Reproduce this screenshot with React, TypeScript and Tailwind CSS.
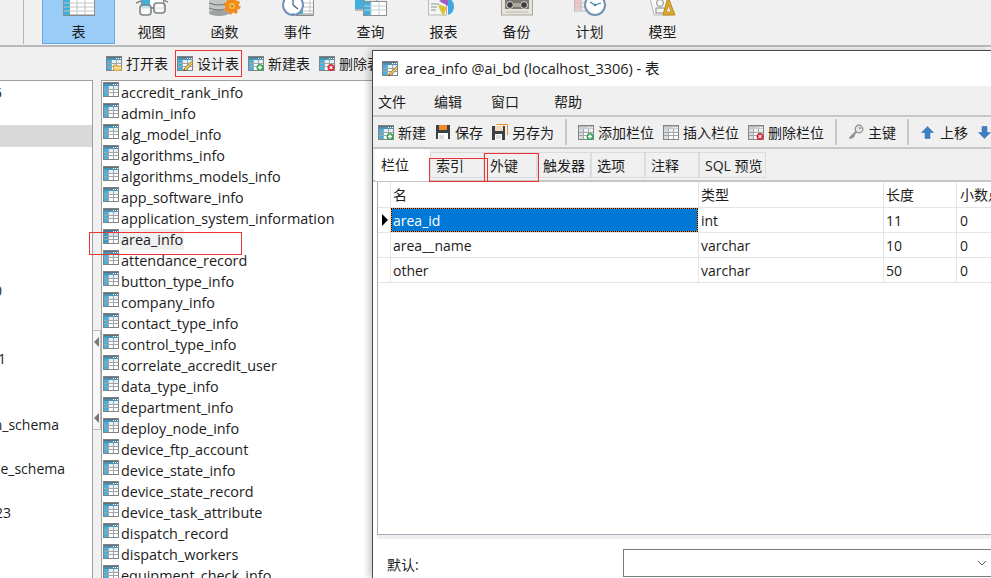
import React from "react";

const FONT = "font-['Open_Sans','Noto_Sans_CJK_SC',sans-serif]";

function SmallTable({ overlay, dim, hl }: { overlay?: React.ReactNode; dim?: boolean; hl?: boolean }) {
  return (
    <svg width="16" height="15" viewBox="0 0 16 15" className="shrink-0">
      <rect x="0.5" y="0.5" width="15" height="14" fill="#fff" stroke="#7f8487" />
      <rect x="1" y="1" width="14" height="3" fill={dim ? "#c9cdd0" : hl ? "#2f7fb5" : "#4b93b5"} />
      <rect x="1" y="1" width="14" height="1" fill={dim ? "#b5b9bc" : "#5d6f7a"} />
      <rect x="1" y="4" width="4" height="10" fill={dim ? "#d7dbde" : hl ? "#3a9ad2" : "#45b1dc"} />
      <rect x="5" y="4" width="10" height="3" fill={dim ? "#eef0f1" : hl ? "#cfe3ef" : "#e6f1f6"} />
      <path d="M1 7.5H15M1 10.5H15M5.5 4V14M10.5 4V14" stroke="#9fa5a9" strokeWidth="1" />
      <path d="M10 2.5H15" stroke="#fff" strokeWidth="1" strokeDasharray="1 1" />
      {overlay}
    </svg>
  );
}

const Plus = (
  <g>
    <circle cx="12" cy="11.5" r="3.5" fill="#3aa655" />
    <path d="M10 11.5H14M12 9.5V13.5" stroke="#fff" strokeWidth="1.4" />
  </g>
);
const Del = (
  <g>
    <circle cx="12" cy="11.5" r="3.5" fill="#d92b3a" />
    <path d="M10.6 10.1L13.4 12.9M13.4 10.1L10.6 12.9" stroke="#fff" strokeWidth="1.1" />
  </g>
);
const Pencil = (
  <g>
    <path d="M14.5 5.5L16 7L9 14.5L6.5 15L7 12.5Z" fill="#e7c35c" stroke="#8d6f2a" strokeWidth="0.7" />
    <path d="M6.5 15L7 13L8.5 14.5Z" fill="#444" />
  </g>
);
const Folder = (
  <g>
    <path d="M7.5 9H11L12 10H15.5V15H7.5Z" fill="#f0c766" stroke="#b48a32" strokeWidth="0.7" />
    <path d="M8 12H15" stroke="#fff2c4" />
  </g>
);

function Floppy({ orange }: { orange?: boolean }) {
  return (
    <svg width="16" height="16" viewBox="0 0 16 16" className="shrink-0">
      {orange && <path d="M4.5 0.5H15.5V11" fill="none" stroke="#e88a2e" strokeWidth="1" />}
      <rect x={orange ? 0 : 1} y={orange ? 2 : 1} width={orange ? 13 : 14} height={14} fill="#3b4045" />
      <rect x={orange ? 3 : 4} y={orange ? 2 : 1} width="8" height="5" fill={orange ? "#f3d9b8" : "#f08a2a"} />
      <rect x={3} y={orange ? 10 : 9} width={orange ? 7 : 10} height={6} fill="#fff" />
      <path d="M4 12H9M4 14H9" stroke="#b9bcbe" />
    </svg>
  );
}

function Key() {
  return (
    <svg width="16" height="16" viewBox="0 0 16 16" className="shrink-0">
      <circle cx="11" cy="5" r="3.8" fill="#e4e4e4" stroke="#8b8b8b" strokeWidth="1.2" />
      <circle cx="12" cy="4" r="1" fill="#8b8b8b" />
      <path d="M8.5 7.5L1.5 14.5M3.5 12.5L5 14M5 11L6.5 12.5" stroke="#8b8b8b" strokeWidth="1.8" />
    </svg>
  );
}

function ArrowV({ down }: { down?: boolean }) {
  return (
    <svg width="13" height="13" viewBox="0 0 13 13" className="shrink-0">
      <path
        d={down ? "M4 0.5H9V6.5H12.5L6.5 12.5L0.5 6.5H4Z" : "M4 12.5H9V6.5H12.5L6.5 0.5L0.5 6.5H4Z"}
        fill="#3f7fc4"
        stroke="#2f6aa8"
        strokeWidth="0.5"
      />
    </svg>
  );
}

function BigIcon({ children }: { children: React.ReactNode }) {
  return (
    <svg width="32" height="16" viewBox="0 0 32 16" className="shrink-0">
      {children}
    </svg>
  );
}

const BigGrid = ({ x = 0, w = 32, y = -6, h = 21 }: { x?: number; w?: number; y?: number; h?: number }) => (
  <g>
    <rect x={x + 0.5} y={y} width={w - 1} height={h} fill="#fff" stroke="#8c9091" />
    <rect x={x + 1} y={y} width={6} height={h} fill="#3fb0d9" />
    {[3, 7, 11].map((d) => (
      <path key={d} d={`M${x + 1} ${d}H${x + w - 1}`} stroke="#bfc4c6" />
    ))}
    <path d={`M${x + 14} ${y}V${y + h}M${x + 22} ${y}V${y + h}`} stroke="#bfc4c6" />
    <path d={`M${x} 15.5H${x + w}`} stroke="#85898a" />
  </g>
);

const bigIcons: Record<string, React.ReactNode> = {
  表: <BigGrid />,
  视图: (
    <g>
      <rect x="5.5" y="-6" width="22" height="14" fill="#fff" stroke="#8c9091" />
      <rect x="6" y="-6" width="8" height="14" fill="#3fb0d9" />
      <path d="M0 3L5 1M32 2L27 0" stroke="#888" strokeWidth="1.4" />
      <rect x="4" y="5" width="11" height="10" rx="3" fill="#ffffffaa" stroke="#7d8487" strokeWidth="1.6" />
      <rect x="18" y="3" width="11" height="10" rx="3" fill="#ffffffaa" stroke="#7d8487" strokeWidth="1.6" />
      <path d="M15 8H18" stroke="#7d8487" strokeWidth="1.6" />
    </g>
  ),
  函数: (
    <g>
      <rect x="0" y="-4" width="20" height="17" fill="#c2c6c7" />
      <ellipse cx="10" cy="13" rx="10" ry="3" fill="#9da2a3" />
      <path d="M0 3Q10 7 20 3M0 8Q10 12 20 8" stroke="#6f7475" fill="none" />
      <circle cx="23" cy="6" r="7" fill="#f08a1d" />
      <circle cx="23" cy="6" r="7.6" fill="none" stroke="#f08a1d" strokeWidth="2" strokeDasharray="3 3" />
      <circle cx="23" cy="6" r="3" fill="#f5c64a" />
      <circle cx="23" cy="6" r="1.5" fill="#d9801e" />
    </g>
  ),
  事件: (
    <g>
      <BigGrid x={14} w={18} y={-6} h={20} />
      <circle cx="11" cy="5" r="10" fill="#fff" stroke="#7391b5" strokeWidth="2" />
      <path d="M11 5V-1M11 5L16 9" stroke="#3f5a7a" strokeWidth="1.2" />
      <circle cx="11" cy="14" r="0.8" fill="#4a6a8a" />
    </g>
  ),
  查询: (
    <g>
      <rect x="0" y="-4" width="22" height="14" fill="#dfe8eb" stroke="#7f8688" />
      <rect x="0" y="-2" width="10" height="11" fill="#3fb0d9" />
      <rect x="8.5" y="1.5" width="23" height="14" fill="#fff" stroke="#8c9091" />
      <rect x="9" y="2" width="7" height="13" fill="#3fb0d9" />
      <path d="M9 6H31M9 10H31M16 2V15M24 2V15" stroke="#bfd0d6" />
    </g>
  ),
  报表: (
    <g>
      <rect x="0.5" y="-2" width="18" height="17" fill="#f4f4f4" stroke="#b7b7b7" />
      <path d="M3 4H11M3 7H9M3 10H8" stroke="#8f9597" />
      <path d="M20 -2A9 9 0 0 1 20 15Z" fill="#3ea8e0" />
      <path d="M20 -4L11 1L20 6Z" fill="#9d5fc2" />
      <path d="M10 4L18 7L16 16Q12 12 10 4Z" fill="#c3d23a" />
      <path d="M13 6L19 8L15 14Z" fill="#f1b72e" />
    </g>
  ),
  备份: (
    <g>
      <rect x="0.5" y="-4" width="31" height="19" fill="#e5e3dc" stroke="#a9a89f" />
      <rect x="4" y="0" width="24" height="9" fill="#7d776c" />
      <circle cx="9" cy="5" r="3.4" fill="#3a3a38" stroke="#dedede" />
      <circle cx="23" cy="5" r="3.4" fill="#3a3a38" stroke="#dedede" />
      <rect x="13" y="3" width="6" height="4" fill="#ada89c" />
      <path d="M5 12H27" stroke="#bdbab0" />
    </g>
  ),
  计划: (
    <g>
      <rect x="0.5" y="-4" width="18" height="15" fill="#f3f0ef" stroke="#bcb8b6" />
      <rect x="1" y="0" width="7" height="10" fill="#efc8c8" />
      <path d="M1 3H18M1 7H18M7 -4V11" stroke="#c9c3c1" />
      <circle cx="21" cy="5" r="10" fill="#fff" stroke="#7391b5" strokeWidth="2" />
      <path d="M21 5L16 2M21 5L27 3" stroke="#3f7f95" strokeWidth="1.2" />
      <circle cx="21" cy="5" r="1.2" fill="#2a89b0" />
    </g>
  ),
  模型: (
    <g>
      <path d="M3 -2H22L23 15H7Z" fill="#f7f7f6" stroke="#b5b5b3" />
      <circle cx="13" cy="3" r="3.5" fill="#f4f4f2" stroke="#8a8a88" />
      <rect x="9" y="8" width="9" height="5" fill="#f4f4f2" stroke="#8a8a88" />
      <path d="M21 -3L16 15H28Z" fill="#ddaa2b" stroke="#b9861c" />
      <path d="M21.5 5L19.5 12H24Z" fill="#f5f2e8" stroke="#a47a1a" strokeWidth="0.6" />
    </g>
  ),
};

const topItems = ["表", "视图", "函数", "事件", "查询", "报表", "备份", "计划", "模型"];

const tables = [
  "accredit_rank_info",
  "admin_info",
  "alg_model_info",
  "algorithms_info",
  "algorithms_models_info",
  "app_software_info",
  "application_system_information",
  "area_info",
  "attendance_record",
  "button_type_info",
  "company_info",
  "contact_type_info",
  "control_type_info",
  "correlate_accredit_user",
  "data_type_info",
  "department_info",
  "deploy_node_info",
  "device_ftp_account",
  "device_state_info",
  "device_state_record",
  "device_task_attribute",
  "dispatch_record",
  "dispatch_workers",
  "equipment_check_info",
];

const leftRows: { t: string; w: number; mt?: number; sel?: boolean }[] = [
  { t: "ai_bd_2015", w: 2 },
  { t: "", w: 0 },
  { t: "", w: 0, sel: true },
  { t: "", w: 0 },
  { t: "", w: 0 },
  { t: "", w: 0 },
  { t: "", w: 0 },
  { t: "", w: 0 },
  { t: "", w: 0 },
  { t: "db_10", w: 2 },
  { t: "", w: 0 },
  { t: "", w: 0 },
  { t: "db_1", w: 6, mt: 2 },
  { t: "", w: 0 },
  { t: "", w: 0 },
  { t: "information_schema", w: 59 },
  { t: "", w: 0 },
  { t: "performance_schema", w: 65 },
  { t: "", w: 0 },
  { t: "test123", w: 11 },
];

function ToolItem({ icon, text, ml }: { icon: React.ReactNode; text: string; ml: string }) {
  return (
    <div className={`flex items-center ${ml}`}>
      {icon}
      <span className="ml-[4px] whitespace-nowrap">{text}</span>
    </div>
  );
}

const Sep = ({ ml }: { ml: string }) => <div className={`w-[2px] h-[26px] bg-[#c8c8c8] ${ml}`} />;

function Tab({ text, w, active }: { text: string; w: string; active?: boolean }) {
  return active ? (
    <div className={`${w} h-[32px] bg-white pl-[6px] pt-[5px]`}>{text}</div>
  ) : (
    <div className={`${w} h-[26px] mt-[3px] bg-[#f0f0f0] border border-[#dcdcdc] flex items-center pl-[5px] whitespace-nowrap`}>
      {text}
    </div>
  );
}

const columns = "grid grid-cols-[13px_308px_185px_73px_1fr]";

function GridRow({ name, type, len, scale, sel }: { name: string; type: string; len: string; scale: string; sel?: boolean }) {
  return (
    <div className={`${columns} h-[25px] border-b border-[#e4e4e4]`}>
      <div className="border-r border-[#e4e4e4] flex items-center pl-[4px]">
        {sel && <div className="w-0 h-0 border-y-[6px] border-y-transparent border-l-[6px] border-l-black" />}
      </div>
      {sel ? (
        <div className="bg-[#f08a1e] border border-dotted border-black mr-[1px]">
          <div className="h-full bg-[#0078d7] text-white pl-[1px] pt-[1px] flex items-center">{name}</div>
        </div>
      ) : (
        <div className="border-r border-[#e4e4e4] pl-[2px] flex items-center">{name}</div>
      )}
      <div className="border-r border-[#e4e4e4] pl-[2px] pt-[1px] flex items-center">{type}</div>
      <div className="border-r border-[#e4e4e4] pl-[2px] pt-[1px] flex items-center">{len}</div>
      <div className="pl-[3px] pt-[1px] flex items-center">{scale}</div>
    </div>
  );
}

export default function App() {
  return (
    <div className={`relative w-[991px] h-[578px] overflow-hidden bg-[#f0f0f0] text-[14px] text-[#1c1c1c] ${FONT}`}>
      {/* main toolbar */}
      <div className="h-[47px] border-b-2 border-[#b9b9b9] flex">
        <div className="w-[24px] h-[44px] border-r border-[#b4b4b4] shrink-0" />
        <div className="flex ml-[18px]">
          {topItems.map((t, i) => (
            <div
              key={t}
              className={`w-[73px] h-[44px] flex flex-col items-center ${i === 0 ? "bg-[#99ccf6] border border-t-0 border-[#62ace9]" : ""}`}
            >
              <BigIcon>{bigIcons[t]}</BigIcon>
              <span className="mt-[6px] leading-[20px]">{t}</span>
            </div>
          ))}
        </div>
      </div>

      {/* object toolbar */}
      <div className="h-[33px] flex items-center pl-[106px]">
        <ToolItem ml="" icon={<SmallTable overlay={Folder} />} text="打开表" />
        <ToolItem ml="ml-[9px]" icon={<SmallTable overlay={Pencil} />} text="设计表" />
        <ToolItem ml="ml-[9px]" icon={<SmallTable overlay={Plus} />} text="新建表" />
        <ToolItem ml="ml-[9px]" icon={<SmallTable overlay={Del} />} text="删除表" />
      </div>

      {/* body */}
      <div className="flex h-[498px]">
        <div className="w-[93px] shrink-0 h-full bg-white border-t border-r border-[#a0a0a0] overflow-hidden flex flex-col">
          {leftRows.map((r, i) => (
            <div
              key={i}
              className={`h-[22px] shrink-0 flex items-center justify-end whitespace-nowrap ${r.sel ? "bg-[#d9d9d9]" : ""} ${r.mt === 2 ? "mt-[2px]" : ""}`}
              style={{ width: r.sel ? "100%" : r.w }}
            >
              {r.t}
            </div>
          ))}
        </div>
        <div className="w-[8px] shrink-0 h-full flex flex-col pt-[250px]">
          <div className="h-[100px] w-[8px] bg-[#f7f7f7] border-r border-[#bdbdbd] border-y flex flex-col justify-between py-[6px] pl-[1px]">
            <div className="w-0 h-0 border-y-[5px] border-y-transparent border-r-[5px] border-r-[#777]" />
            <div className="w-0 h-0 border-y-[5px] border-y-transparent border-r-[5px] border-r-[#777]" />
          </div>
        </div>
        <div className="flex-1 h-full bg-white border-t border-l border-[#a0a0a0] overflow-hidden pt-[1px] pl-[1px] text-[14.4px]">
          {tables.map((t) => (
            <div key={t} className="h-[21px] flex items-start whitespace-nowrap">
              <SmallTable hl={t === "area_info"} />
              <span className={`ml-[1px] pl-[1px] pr-[1px] h-[21px] leading-[21px] ${t === "area_info" ? "bg-[#f0f0f0]" : ""}`}>{t}</span>
            </div>
          ))}
        </div>
      </div>

      {/* table design window */}
      <div className="absolute left-[372px] top-[50px] w-[620px] h-[528px] bg-white border-l border-t border-[#4a4a4a] shadow-[-4px_0_6px_rgba(0,0,0,0.18)] flex flex-col">
        <div className="h-[35px] shrink-0 bg-white flex items-center pl-[9px] text-[14.5px]">
          <SmallTable overlay={Pencil} />
          <span className="ml-[7px] whitespace-nowrap">area_info @ai_bd (localhost_3306) - 表</span>
        </div>
        <div className="h-[31px] shrink-0 bg-[#f0f0f0] border-b-2 border-[#c6c6c6] flex items-center pt-[1px]">
          <span className="ml-[5px]">文件</span>
          <span className="ml-[28px]">编辑</span>
          <span className="ml-[29px]">窗口</span>
          <span className="ml-[35px]">帮助</span>
        </div>
        <div className="h-[32px] shrink-0 bg-[#f0f0f0] border-b-2 border-[#c6c6c6] flex items-center pl-[5px] overflow-hidden">
          <ToolItem ml="" icon={<SmallTable overlay={Plus} />} text="新建" />
          <ToolItem ml="ml-[9px]" icon={<Floppy />} text="保存" />
          <ToolItem ml="ml-[9px]" icon={<Floppy orange />} text="另存为" />
          <Sep ml="ml-[11px]" />
          <ToolItem ml="ml-[11px]" icon={<SmallTable dim overlay={Plus} />} text="添加栏位" />
          <ToolItem ml="ml-[9px]" icon={<SmallTable dim />} text="插入栏位" />
          <ToolItem ml="ml-[9px]" icon={<SmallTable dim overlay={Del} />} text="删除栏位" />
          <Sep ml="ml-[11px]" />
          <ToolItem ml="ml-[11px]" icon={<Key />} text="主键" />
          <Sep ml="ml-[11px]" />
          <div className="flex items-center ml-[12px]">
            <ArrowV />
            <span className="ml-[6px] whitespace-nowrap">上移</span>
          </div>
          <div className="ml-[10px]"><ArrowV down /></div>
        </div>
        <div className="h-[33px] shrink-0 bg-[#f0f0f0] flex pl-[2px] border-b-2 border-[#c6c6c6]">
          <Tab text="栏位" w="w-[55px]" active />
          <Tab text="索引" w="w-[54px]" />
          <Tab text="外键" w="w-[53px]" />
          <Tab text="触发器" w="w-[54px]" />
          <Tab text="选项" w="w-[54px]" />
          <Tab text="注释" w="w-[54px]" />
          <Tab text="SQL 预览" w="w-[67px]" />
        </div>
        <div className="flex-1 bg-white pl-[4px] flex flex-col min-h-0">
          <div className="h-[353px] shrink-0 border-l border-b border-[#a9a9b8]">
            <div className={`${columns} h-[26px] border-b border-[#e4e4e4]`}>
              <div className="border-r border-[#e4e4e4]" />
              <div className="border-r border-[#e4e4e4] pl-[2px] flex items-center">名</div>
              <div className="border-r border-[#e4e4e4] pl-[2px] flex items-center">类型</div>
              <div className="border-r border-[#e4e4e4] pl-[2px] flex items-center">长度</div>
              <div className="pl-[3px] flex items-center whitespace-nowrap overflow-hidden">小数点</div>
            </div>
            <GridRow sel name="area_id" type="int" len="11" scale="0" />
            <GridRow name="area__name" type="varchar" len="10" scale="0" />
            <GridRow name="other" type="varchar" len="50" scale="0" />
          </div>
          <div className="h-[4px] shrink-0 bg-[#f0f0f0]" />
          <div className="flex-1 flex items-start pl-[10px] pt-[10px]">
            <span className="w-[236px] shrink-0 mt-[5px] whitespace-nowrap">默认:</span>
            <div className="w-[370px] shrink-0 h-[28px] border border-[#7a7a7a] bg-white flex items-center justify-end pr-[5px]">
              <svg width="10" height="6" viewBox="0 0 10 6">
                <path d="M1 1L5 5L9 1" fill="none" stroke="#555" strokeWidth="1" />
              </svg>
            </div>
          </div>
        </div>
      </div>

      {/* red annotation rectangles */}
      <div className="absolute left-[175px] top-[50px] w-[67px] h-[27px] border border-[#ee3333]" />
      <div className="absolute left-[89px] top-[232px] w-[153px] h-[23px] border border-[#ee3333]" />
      <div className="absolute left-[429px] top-[158px] w-[59px] h-[24px] border border-[#ee3333]" />
      <div className="absolute left-[484px] top-[153px] w-[55px] h-[29px] border border-[#ee3333]" />
    </div>
  );
}
